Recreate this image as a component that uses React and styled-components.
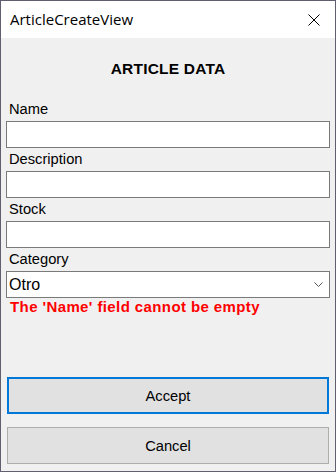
import React from "react";
import styled, { createGlobalStyle } from "styled-components";

const GlobalStyle = createGlobalStyle`
    html, body {
        margin: 0;
        padding: 0;
        background: #f0f0f0;
    }
    * {
        box-sizing: border-box;
    }
`;

const Window = styled.div`
    width: 336px;
    height: 472px;
    border: 1px solid #5f5f6e;
    display: flex;
    flex-direction: column;
    font-family: "Liberation Sans", Arial, sans-serif;
    color: #000;
`;

const TitleBar = styled.div`
    height: 37px;
    flex-shrink: 0;
    background: #ffffff;
    display: flex;
    align-items: center;
    justify-content: space-between;
    padding-left: 9px;
`;

const Title = styled.span`
    font-family: "Open Sans", "Noto Sans", sans-serif;
    font-size: 15px;
    line-height: 20px;
    margin-top: -2px;
`;

const CloseButton = styled.div`
    width: 43px;
    height: 37px;
    display: flex;
    align-items: center;
    justify-content: center;
`;

const Body = styled.div`
    flex: 1;
    background: #f0f0f0;
    display: flex;
    flex-direction: column;
    padding: 22px 5px 7px;
`;

const Heading = styled.h1`
    margin: 0;
    text-align: center;
    font-size: 15.5px;
    line-height: 18px;
    font-weight: bold;
    letter-spacing: 0.2px;
`;

const Form = styled.div`
    display: flex;
    flex-direction: column;
    margin-top: 20px;
`;

const Label = styled.label`
    display: block;
    margin: 3px 0 3px 3px;
    font-size: 14.7px;
    line-height: 17px;
`;

const TextInput = styled.input`
    display: block;
    width: 100%;
    height: 27px;
    margin: 0;
    border: 1px solid #7a7a7a;
    background: #ffffff;
    outline: none;
    font-family: "Liberation Sans", Arial, sans-serif;
    font-size: 16px;
    padding: 0 2px;
`;

const Select = styled.div`
    height: 27px;
    border: 1px solid #7a7a7a;
    background: #ffffff;
    display: flex;
    align-items: center;
    justify-content: space-between;
    padding: 0 6px 0 2px;
    font-size: 16px;
`;

const ErrorText = styled.div`
    margin-left: 4px;
    color: #ff0000;
    font-weight: bold;
    font-size: 15px;
    letter-spacing: 0.4px;
    line-height: 17px;
`;

const Buttons = styled.div`
    margin-top: auto;
    display: flex;
    flex-direction: column;
    gap: 13px;
    padding: 0 1px;
`;

const Button = styled.button`
    height: 37px;
    width: 100%;
    background: #e1e1e1;
    border: ${(p) => (p.$focused ? "2px solid #0078d7" : "1px solid #adadad")};
    font-family: "Liberation Sans", Arial, sans-serif;
    font-size: 14.7px;
    color: #000;
    padding: 0;
    display: flex;
    align-items: center;
    justify-content: center;
`;

export default function App() {
    return (
        <>
            <GlobalStyle />
            <Window>
                <TitleBar>
                    <Title>ArticleCreateView</Title>
                    <CloseButton>
                        <svg width="12" height="12" viewBox="0 0 12 12">
                            <path
                                d="M0.5 0.5 L11.5 11.5 M11.5 0.5 L0.5 11.5"
                                stroke="#000"
                                strokeWidth="1"
                                fill="none"
                            />
                        </svg>
                    </CloseButton>
                </TitleBar>
                <Body>
                    <Heading>ARTICLE DATA</Heading>
                    <Form>
                        <Label>Name</Label>
                        <TextInput />
                        <Label>Description</Label>
                        <TextInput />
                        <Label>Stock</Label>
                        <TextInput />
                        <Label>Category</Label>
                        <Select>
                            <span>Otro</span>
                            <svg width="9" height="5" viewBox="0 0 9 5">
                                <path
                                    d="M0.5 0.5 L4.5 4.5 L8.5 0.5"
                                    stroke="#555"
                                    strokeWidth="1"
                                    fill="none"
                                />
                            </svg>
                        </Select>
                        <ErrorText>The 'Name' field cannot be empty</ErrorText>
                    </Form>
                    <Buttons>
                        <Button $focused>Accept</Button>
                        <Button>Cancel</Button>
                    </Buttons>
                </Body>
            </Window>
        </>
    );
}
